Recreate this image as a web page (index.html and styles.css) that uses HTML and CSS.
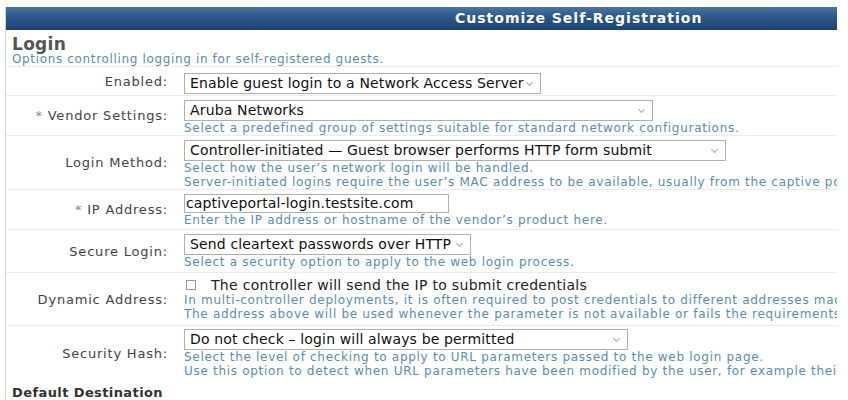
FILE: index.html
```html
<!DOCTYPE html>
<html lang="en">
<head>
    <meta charset="UTF-8">
    <title>Customize Self-Registration</title>
    <link rel="stylesheet" href="styles.css">
</head>
<body>
    <div class="panel">
        <div class="panel-header">Customize Self-Registration</div>
        <div class="panel-body">
            <h2 class="section-title">Login</h2>
            <p class="section-desc">Options controlling logging in for self-registered guests.</p>

            <table class="form-table">
                <tr class="row-enabled">
                    <td class="label">Enabled:</td>
                    <td class="field">
                        <span class="select w-enabled">Enable guest login to a Network Access Server</span>
                    </td>
                </tr>
                <tr>
                    <td class="label"><span class="req">*</span> Vendor Settings:</td>
                    <td class="field">
                        <span class="select w-vendor">Aruba Networks</span>
                        <div class="hint">Select a predefined group of settings suitable for standard network configurations.</div>
                    </td>
                </tr>
                <tr>
                    <td class="label">Login Method:</td>
                    <td class="field">
                        <span class="select w-method">Controller-initiated — Guest browser performs HTTP form submit</span>
                        <div class="hint">Select how the user’s network login will be handled.</div>
                        <div class="hint">Server-initiated logins require the user’s MAC address to be available, usually from the captive portal redirection process.</div>
                    </td>
                </tr>
                <tr class="row-ip">
                    <td class="label"><span class="req">*</span> IP Address:</td>
                    <td class="field">
                        <span class="text-input w-ip">captiveportal-login.testsite.com</span>
                        <div class="hint">Enter the IP address or hostname of the vendor’s product here.</div>
                    </td>
                </tr>
                <tr class="row-secure">
                    <td class="label">Secure Login:</td>
                    <td class="field">
                        <span class="select w-secure">Send cleartext passwords over HTTP</span>
                        <div class="hint">Select a security option to apply to the web login process.</div>
                    </td>
                </tr>
                <tr class="row-dynamic">
                    <td class="label">Dynamic Address:</td>
                    <td class="field">
                        <label class="check"><span class="box"></span>The controller will send the IP to submit credentials</label>
                        <div class="hint">In multi-controller deployments, it is often required to post credentials to different addresses made available as part of the original redirection.</div>
                        <div class="hint">The address above will be used whenever the parameter is not available or fails the requirements below.</div>
                    </td>
                </tr>
                <tr class="row-hash">
                    <td class="label">Security Hash:</td>
                    <td class="field">
                        <span class="select w-hash">Do not check – login will always be permitted</span>
                        <div class="hint">Select the level of checking to apply to URL parameters passed to the web login page.</div>
                        <div class="hint">Use this option to detect when URL parameters have been modified by the user, for example their MAC address.</div>
                    </td>
                </tr>
            </table>

            <h3 class="subsection">Default Destination</h3>
        </div>
    </div>
</body>
</html>
```

FILE: styles.css
```css
body {
    margin: 0;
    padding: 7px 0 0 5px;
    background: #fff;
    font-family: "DejaVu Sans", Verdana, sans-serif;
    color: #444;
}
.panel {
    width: 831px;
    overflow: hidden;
    border-left: 1px solid #d4d4d4;
}
.panel-header {
    height: 23px;
    line-height: 23px;
    padding-left: 449px;
    background: linear-gradient(#4a75a3, #2a5688 45%, #1a4375);
    color: #fff;
    font-weight: bold;
    font-size: 14px;
    letter-spacing: 1px;
    white-space: nowrap;
}
.section-title {
    margin: 6px 0 0 6px;
    font-size: 17px;
    letter-spacing: 0.3px;
    color: #555;
    line-height: 17px;
}
.section-desc {
    margin: 0 0 0 6px;
    font-size: 12px;
    letter-spacing: 0.65px;
    color: #5a8db4;
    line-height: 13px;
    white-space: nowrap;
}
.form-table {
    border-collapse: collapse;
    table-layout: fixed;
    width: 831px;
}
.form-table tr {
    border-top: 1px solid #ececec;
}
.label {
    width: 162px;
    padding: 0 16px 0 0;
    text-align: right;
    vertical-align: middle;
    white-space: nowrap;
    font-size: 13px;
    letter-spacing: 0.8px;
    color: #444;
}
.req {
    color: #888;
}
.field {
    padding: 4px 0 0 0;
    vertical-align: top;
    white-space: nowrap;
    overflow: hidden;
}
.row-enabled .field {
    padding: 6px 0 1px 0;
}
.row-ip .field {
    padding: 4px 0 2px 0;
}
.row-secure .field {
    padding: 4px 0 3px 0;
}
.row-dynamic .field {
    padding: 4px 0 4px 0;
}
.row-hash .field {
    padding: 3px 0 2px 0;
}
.select,
.text-input {
    display: block;
    position: relative;
    box-sizing: border-box;
    height: 21px;
    line-height: 19px;
    padding: 0 5px;
    border: 1px solid #b0b0b0;
    background: #fff;
    color: #111;
    font-size: 14px;
    letter-spacing: 0.15px;
    overflow: hidden;
}
.text-input {
    height: 19px;
    line-height: 17px;
    padding: 0 1px;
}
.select::after {
    content: "";
    position: absolute;
    right: 8px;
    top: 6px;
    width: 4px;
    height: 4px;
    border-right: 1px solid #aaa;
    border-bottom: 1px solid #aaa;
    transform: rotate(45deg);
}
.w-enabled { width: 357px; }
.w-vendor { width: 469px; }
.w-method { width: 542px; }
.w-ip { width: 265px; }
.w-secure { width: 287px; }
.w-hash { width: 444px; }
.hint {
    font-size: 12px;
    letter-spacing: 0.7px;
    line-height: 14px;
    color: #5a8db4;
}
.check {
    display: flex;
    align-items: center;
    gap: 15px;
    font-size: 14px;
    letter-spacing: 0.3px;
    color: #222;
    line-height: 16px;
}
.box {
    width: 8px;
    height: 8px;
    border: 1px solid #999;
    margin-left: 2px;
}
.subsection {
    margin: 5px 0 0 6px;
    font-size: 13px;
    letter-spacing: 0.4px;
    color: #333;
}
```
